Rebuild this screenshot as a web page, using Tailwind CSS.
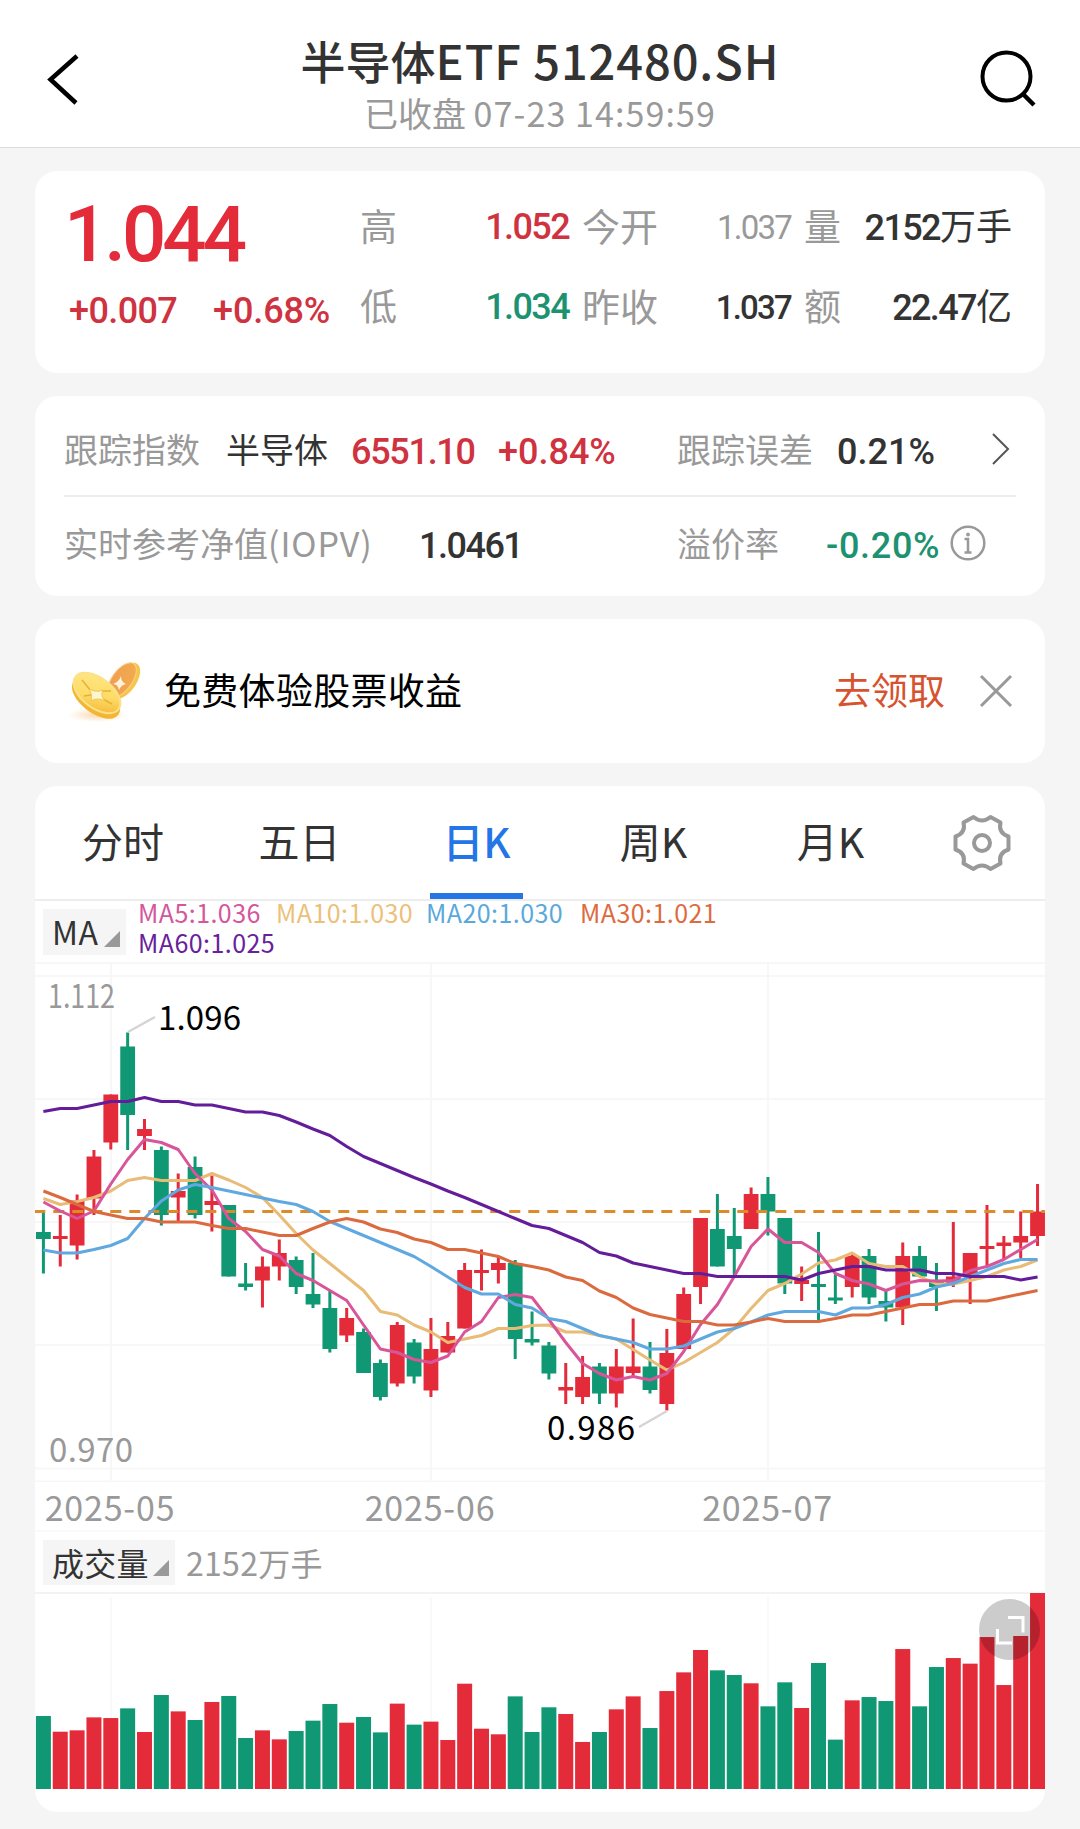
<!DOCTYPE html>
<html lang="zh-CN">

<head>
    <meta charset="UTF-8">
    <meta name="viewport" content="width=device-width, initial-scale=1.0">
    <title>半导体ETF 512480.SH</title>
    <script src="https://cdn.jsdelivr.net/npm/@tailwindcss/browser@4"></script>
</head>

<body class="bg-[#f5f5f5] text-[#333] font-['Noto_Sans_CJK_SC',sans-serif] w-[1080px] h-[1829px] overflow-hidden leading-none whitespace-nowrap">
    <!-- Header -->
    <header class="flex h-[148px] bg-white border-b border-[#dcdcdc]">
        <div class="w-[200px] pt-[54px] pl-[46px]">
            <svg class="w-[34px] h-[52px]" viewBox="0 0 34 52" fill="none" stroke="#000" stroke-width="4.5">
                <path d="M31 2 L4.500 25.500 L30 49" />
            </svg>
        </div>
        <div class="flex-1 flex flex-col items-center">
            <h1 class="mt-[34px] h-[52px] leading-[52px] text-[45px] font-medium">半导体<span class="text-[47px] tracking-[0.9px]">ETF 512480.SH</span></h1>
            <p class="mt-[6px] h-[42px] leading-[42px] text-[34px] text-[#999]">已收盘 <span class="tracking-[1.1px]">07-23 14:59:59</span></p>
        </div>
        <div class="w-[200px] pt-[50px] pl-[100px]">
            <svg class="w-[56px] h-[58px]" viewBox="0 0 56 58" fill="none" stroke="#000" stroke-width="4">
                <circle cx="26.500" cy="26.500" r="24" />
                <path d="M42 43 L54 55" stroke-width="4.500" />
            </svg>
        </div>
    </header>

    <main class="px-[35px] pt-[23px]">
        <!-- Quote -->
        <section class="flex h-[202px] bg-white rounded-[22px] pl-[34px] pr-[32px]">
            <div class="w-[291px] text-[#e32b3a] font-['Roboto']">
                <div class="mt-[26px] -ml-[5px] h-[76px] leading-[76px] text-[78px] font-medium tracking-[-4px]">1.044</div>
                <div class="flex mt-[18px] text-[36px] leading-[40px] font-medium text-[#cf3340] tracking-[-0.6px]">
                    <span class="w-[144px]">+0.007</span><span class="tracking-[-0.1px]">+0.68%</span>
                </div>
            </div>
            <div class="grid flex-1 grid-cols-[209px_13px_209px_13px_208px] auto-rows-[80px] items-center mt-[16px] h-[160px] text-[36px]">
                <div class="flex justify-between items-center"><span class="-mt-[4px] text-[37px] text-[#999]">高</span><span class="font-['Roboto'] font-medium text-[#cf3340] tracking-[-1.6px]">1.052</span></div>
                <i></i>
                <div class="flex justify-between items-center"><span class="-mt-[4px] text-[38px] text-[#999]">今开</span><span class="font-['Roboto'] text-[33px] text-[#999] tracking-[-1.8px]">1.037</span></div>
                <i></i>
                <div class="flex justify-between items-center"><span class="-mt-[4px] text-[37px] text-[#999]">量</span><span class="-mt-[3px]"><span class="font-['Roboto'] font-medium tracking-[-1.6px]">2152</span>万手</span></div>

                <div class="flex justify-between items-center"><span class="-mt-[4px] text-[37px] text-[#999]">低</span><span class="font-['Roboto'] font-medium text-[#1d9270] tracking-[-1.6px]">1.034</span></div>
                <i></i>
                <div class="flex justify-between items-center"><span class="-mt-[4px] text-[38px] text-[#999]">昨收</span><span class="font-['Roboto'] font-medium text-[33px] tracking-[-1.8px]">1.037</span></div>
                <i></i>
                <div class="flex justify-between items-center"><span class="-mt-[4px] text-[37px] text-[#999]">额</span><span class="-mt-[3px]"><span class="font-['Roboto'] font-medium tracking-[-1.6px]">22.47</span>亿</span></div>
            </div>
        </section>

        <!-- Tracked index -->
        <section class="mt-[23px] h-[200px] bg-white rounded-[22px] px-[29px] text-[34px]">
            <div class="flex items-center h-[101px] pt-[6px] border-b-2 border-[#eee]">
                <span class="w-[162px] text-[#999]">跟踪指数</span>
                <span class="w-[125px]">半导体</span>
                <span class="w-[147px] font-['Roboto'] font-medium text-[36px] pt-[6px] text-[#cf3340] tracking-[-1.3px]">6551.10</span>
                <span class="w-[179px] font-['Roboto'] font-medium text-[36px] pt-[6px] text-[#cf3340]">+0.84%</span>
                <span class="w-[160px] text-[#999]">跟踪误差</span>
                <span class="w-[154px] font-['Roboto'] font-medium text-[36px] pt-[6px]">0.21%</span>
                <svg class="w-[20px] h-[34px]" viewBox="0 0 20 34" fill="none" stroke="#555" stroke-width="2"><path d="M2 2 L17 17 L2 32" /></svg>
            </div>
            <div class="flex items-center h-[94px] -mt-[1px]">
                <span class="w-[355px] text-[#999]">实时参考净值<span class="tracking-[0.9px]">(IOPV)</span></span>
                <span class="w-[258px] font-['Roboto'] font-medium text-[36px] pt-[5px] tracking-[-1.5px]">1.0461</span>
                <span class="w-[149px] text-[#999]">溢价率</span>
                <span class="w-[124px] font-['Roboto'] font-medium text-[36px] pt-[5px] text-[#1d9270] tracking-[0.7px]">-0.20%</span>
                <svg class="w-[36px] h-[36px] shrink-0" viewBox="0 0 36 36" fill="none" stroke="#999" stroke-width="2.500">
                    <circle cx="18" cy="18" r="16.300" />
                    <path d="M14.500 14 H18 V27 M14.500 27.500 H21.500" /><circle cx="18" cy="9.500" r="1.500" fill="#999" stroke-width="1" />
                </svg>
            </div>
        </section>

        <!-- Promo -->
        <section class="flex items-center mt-[23px] h-[144px] bg-white rounded-[22px] pl-[28px] pr-[32px] text-[37px]">
            <svg class="w-[86px] h-[70px] mr-[15px]" viewBox="0 0 86 70">
                <defs>
                    <linearGradient id="gold" x1="0" y1="0" x2="1" y2="1"><stop offset="0" stop-color="#ffe98c" /><stop offset=".55" stop-color="#fddc66" /><stop offset="1" stop-color="#f2ae2c" /></linearGradient>
                    <linearGradient id="copper" x1="0" y1="0" x2="1" y2="1"><stop offset="0" stop-color="#ee9a55" /><stop offset="1" stop-color="#f3ae4b" /></linearGradient>
                    <radialGradient id="glow"><stop offset="0" stop-color="#fbd9b0" /><stop offset="1" stop-color="#fbd9b0" stop-opacity="0" /></radialGradient>
                </defs>
                <ellipse cx="34" cy="59" rx="29" ry="7" fill="url(#glow)" />
                <ellipse cx="62" cy="25" rx="21" ry="11" fill="#f8c54c" transform="rotate(-54 62 25)" />
                <ellipse cx="59" cy="24" rx="20" ry="10" fill="url(#copper)" stroke="#fbd08a" transform="rotate(-54 59 24)" />
                <path d="M58 20 Q58 26 63 28 Q58 29 56 34 Q55 28 50 28 Q56 26 58 20Z" fill="#fff3dd" />
                <ellipse cx="33" cy="42" rx="28" ry="15" fill="#f3b633" transform="rotate(37 33 42)" />
                <ellipse cx="34" cy="37" rx="27" ry="15" fill="url(#gold)" stroke="#fbe18a" stroke-width="2" transform="rotate(37 34 37)" />
                <path d="M19 24 L28 35 M48 35 L38 35 M38 42 L49 48 M21 40 L28 39" fill="none" stroke="#e5b13a" stroke-width="1.500" />
                <path d="M26 33 Q34 37 40 34 Q37 40 42 45 Q34 41 28 45 Q30 38 26 33Z" fill="#fff5cf" stroke="#f1c552" />
            </svg>
            <span class="flex-1 -mt-[4px] text-black tracking-[0.3px]">免费体验股票收益</span>
            <span class="-mt-[4px] text-[#d6532f]">去领取</span>
            <svg class="w-[34px] h-[34px] ml-[34px]" viewBox="0 0 34 34" fill="none" stroke="#999" stroke-width="3"><path d="M2 2 L32 32 M32 2 L2 32" /></svg>
        </section>

        <!-- Chart -->
        <section class="relative mt-[23px] h-[1026px] bg-white rounded-[22px] overflow-hidden">
            <nav class="flex h-[115px] text-[41px] border-b-2 border-[#ededed]">
                <div class="w-[176px] flex justify-center items-center pb-[4px]">分时</div>
                <div class="w-[177px] flex justify-center items-center pb-[4px]">五日</div>
                <div class="w-[177px] flex flex-col items-center text-[#2475e6]">
                    <div class="h-[108px] flex items-center pt-[1px] font-medium">日K</div>
                    <div class="w-[93px] h-[6px] bg-[#2475e6]"></div>
                </div>
                <div class="w-[177px] flex justify-center items-center pb-[4px]">周K</div>
                <div class="w-[177px] flex justify-center items-center pb-[4px]">月K</div>
                <div class="flex-1 flex justify-center items-center pr-[1px]">
                    <svg class="w-[60px] h-[60px]" viewBox="0 0 60 60" fill="none" stroke="#999" stroke-width="4" stroke-linejoin="round">
                        <path d="M21.500 4 Q30 11 38.500 4 L48.500 9.500 Q46 20 56.500 23.500 V36.500 Q46 40 48.500 50.500 L38.500 56 Q30 49 21.500 56 L11.500 50.500 Q14 40 3.500 36.500 V23.500 Q14 20 11.500 9.500 Z" />
                        <circle cx="30" cy="30" r="8" />
                    </svg>
                </div>
            </nav>

            <div class="flex h-[61px] pl-[8px]">
                <div class="flex w-[83px] h-[46px] mt-[8px] bg-[#f5f5f5] pl-[9px] text-[32px] leading-[45px] tracking-[0.5px]">MA<svg class="w-[16px] h-[16px] shrink-0 ml-[6px] mt-[22px]" viewBox="0 0 16 16"><path d="M16 0 V16 H0Z" fill="#999" /></svg></div>
                <div class="ml-[12px] text-[25px] leading-[30px] -mt-[4px] tracking-[0.45px]">
                    <div class="flex">
                        <span class="w-[138px] text-[#d4579c]">MA5:1.036</span>
                        <span class="w-[150px] text-[#ecc07a]">MA10:1.030</span>
                        <span class="w-[154px] text-[#5aa8dc]">MA20:1.030</span>
                        <span class="text-[#dd6b40]">MA30:1.021</span>
                    </div>
                    <div class="text-[#67219b]">MA60:1.025</div>
                </div>
            </div>

            <svg id="kline" class="block w-[1010px] h-[520px]" viewBox="35 962 1010 520" fill="none">
                <g stroke="#f7f7f7" stroke-width="2">
                    <path d="M35 963H1045M35 976H1045M35 1099H1045M35 1222H1045M35 1345H1045M35 1468.500H1045M35 1481.500H1045" />
                    <path d="M111 963V1482M431 963V1482M768 963V1482" />
                </g>
                <g id="candles"></g>
                <path d="M34.300 1211.500H1045" stroke="#dc8b2c" stroke-width="3.200" stroke-dasharray="11 8" />
                <g id="averages" stroke-width="3" stroke-linejoin="round"></g>
                <path d="M128 1032L155 1017M667 1411L639 1427" stroke="#d5d5d5" stroke-width="2.500" />
                <g font-size="33">
                    <text x="48" y="1008" fill="#999" textLength="67" lengthAdjust="spacingAndGlyphs">1.112</text>
                    <text x="49" y="1462" fill="#999" textLength="84">0.970</text>
                    <text x="158" y="1030" fill="#000" textLength="83">1.096</text>
                    <text x="547" y="1440" fill="#000" textLength="88">0.986</text>
                </g>
            </svg>

            <div class="h-[50px] border-b-2 border-[#fafafa] grid grid-cols-[150px_490px_185px] leading-[50px] text-[34px] text-[#999] tracking-[0.8px]">
                <span class="text-center">2025-05</span>
                <span class="text-center">2025-06</span>
                <span class="text-center">2025-07</span>
            </div>

            <div class="flex h-[62px] pl-[8px] border-b-2 border-[#f3f3f3] text-[32px] leading-[44px]">
                <div class="flex w-[132px] h-[45px] mt-[8px] bg-[#f5f5f5] pl-[9px] tracking-[0.3px]">成交量<svg class="w-[16px] h-[16px] ml-[4px] mt-[20px]" viewBox="0 0 16 16"><path d="M16 0 V16 H0Z" fill="#999" /></svg></div>
                <span class="mt-[8px] ml-[11px] text-[#999] tracking-[0.3px]">2152万手</span>
            </div>

            <svg id="volume" class="block w-[1010px] h-[197px] -mt-[2px]" viewBox="35 1592 1010 197">
                <path d="M111 1597V1789M431 1597V1789M768 1597V1789" stroke="#f9f9f9" stroke-width="2" />
            </svg>

            <button class="absolute right-[5px] bottom-[152px] w-[61px] h-[61px] rounded-full bg-black/20 flex justify-center items-center">
                <svg class="w-[30px] h-[30px]" viewBox="0 0 30 30" fill="none" stroke="#fff" stroke-width="3"><path d="M13 2.500H28V17.500M2.500 14V28H17" /></svg>
            </button>
        </section>
    </main>

    <script>
        const SVG = 'http://www.w3.org/2000/svg';
        const RED = '#e32b3a', GREEN = '#0f9873';
        const x = i => 43.4 + i * 16.85;

        // [up, high, bodyTop, bodyBottom, low, volume]
        const days = [
            [0, 1212.5, 1232, 1239, 1273.5, 75.4], [1, 1215, 1236, 1239, 1266.5, 59.2], [1, 1194.5, 1200.5, 1245.5, 1259.5, 60.6],
            [1, 1150, 1156.5, 1198.5, 1215, 74], [1, 1094.5, 1094.5, 1142.5, 1149.5, 73.3], [0, 1032.5, 1046.5, 1115, 1150, 83.3],
            [1, 1119, 1129, 1136, 1150, 58.9], [0, 1146.5, 1150, 1215, 1225.5, 97.1], [1, 1173.5, 1191, 1197.5, 1221.5, 80.2],
            [0, 1156.5, 1167, 1215, 1218.5, 71.3], [1, 1175.5, 1201, 1205, 1231.5, 89.9], [0, 1205, 1205, 1276.5, 1276.5, 96.1],
            [0, 1263, 1283.5, 1287, 1290.5, 52.7], [1, 1256.5, 1266.5, 1280.5, 1307.5, 60.6], [1, 1239.5, 1253, 1266.5, 1280.5, 51.3],
            [0, 1256.5, 1260, 1287, 1294, 59.9], [0, 1253, 1294, 1304.5, 1308, 70.6], [0, 1290.5, 1308, 1349, 1352.5, 87.8],
            [1, 1308, 1318, 1335.5, 1342, 68.5], [0, 1328.5, 1332, 1373, 1373, 74.4], [0, 1359.5, 1363, 1397, 1400.5, 58.5],
            [1, 1322, 1325, 1383.5, 1386.5, 88.2], [0, 1339, 1342.5, 1376.5, 1383.5, 66.5], [1, 1318, 1349, 1390.5, 1397, 69.6],
            [1, 1322, 1336, 1352.5, 1352.5, 50.6], [1, 1263, 1270, 1328.5, 1328.5, 108.8], [1, 1249.5, 1270, 1273, 1290.5, 62.3],
            [1, 1256.5, 1263, 1270, 1283.5, 56.5], [0, 1260, 1263, 1339, 1359, 95.7], [0, 1311.5, 1339, 1342.5, 1345.5, 58.9],
            [0, 1342, 1345.5, 1373.5, 1379.5, 84.4], [1, 1363, 1387, 1390.5, 1404, 77.5], [1, 1356, 1377, 1397, 1404, 48.6],
            [0, 1363, 1366.5, 1393.5, 1404, 58.9], [1, 1349, 1366.5, 1393.5, 1407.5, 82.3], [1, 1318.5, 1366.5, 1373, 1377, 95.7],
            [0, 1342, 1366.5, 1390, 1393.5, 63], [1, 1329, 1353, 1404, 1410.5, 101.2], [1, 1287.5, 1294, 1349, 1349, 120.5],
            [1, 1218, 1218, 1287, 1304, 143.6], [0, 1194, 1229, 1266.5, 1266.5, 122.6], [0, 1208, 1236, 1249, 1276.5, 117.8],
            [1, 1187.5, 1194, 1229, 1229, 109.2], [0, 1177, 1194, 1211.5, 1235.5, 85.4], [0, 1218, 1218, 1283.5, 1294, 110.2],
            [1, 1266.5, 1280, 1284, 1301, 83.7], [0, 1232, 1284, 1287, 1321, 130.2], [0, 1273, 1297.5, 1300.5, 1304, 51],
            [1, 1253, 1256, 1287, 1297.5, 91.6], [0, 1249, 1256, 1297.5, 1304, 95], [0, 1290.5, 1301, 1307.5, 1321.5, 90.9],
            [1, 1242.5, 1256, 1307.5, 1325, 144.6], [0, 1246, 1256, 1276.5, 1276.5, 85.4], [0, 1263, 1280, 1287, 1311, 126],
            [1, 1222, 1276.5, 1283.5, 1287, 135.3], [1, 1253, 1253, 1276.5, 1304, 129.5], [1, 1205, 1246, 1249, 1266.5, 157],
            [1, 1236, 1242.5, 1246, 1260, 107.4], [1, 1211.5, 1236, 1242.5, 1258, 158.1], [1, 1184, 1211.5, 1236, 1246, 202.5]
        ];

        const averages = {
            '#e8bb76': [1198.5, 1204.5, 1201.5, 1197.5, 1191, 1180.5, 1177.5, 1180.5, 1180.5, 1180.5, 1173.5, 1180, 1187.5, 1197.5, 1215, 1233.5, 1250, 1263.5, 1277, 1290.5, 1311.5, 1315, 1325, 1332, 1342.5, 1339, 1335.5, 1328.5, 1328.5, 1325.5, 1325, 1332, 1332, 1335.5, 1339, 1349.5, 1360, 1370, 1362.5, 1352.5, 1342.5, 1328.5, 1308.5, 1290.5, 1283.5, 1274, 1263, 1260, 1253, 1263.5, 1266.5, 1266.5, 1276.5, 1284, 1284, 1280.5, 1276.5, 1270, 1266.5, 1260],
            '#d8559a': [1202, 1211, 1218.5, 1211, 1184, 1159.5, 1139.5, 1142.5, 1149.5, 1173.5, 1190, 1218.5, 1231.5, 1249.5, 1256, 1273.5, 1280.5, 1290.5, 1300.5, 1325, 1349, 1352.5, 1359.5, 1362.5, 1356, 1332, 1321.5, 1297.5, 1294.5, 1297.5, 1319.5, 1342.5, 1363.5, 1373.5, 1380, 1376.5, 1380, 1373.5, 1351.5, 1324.5, 1304.5, 1276.5, 1246.5, 1229, 1242.5, 1242.5, 1252.5, 1273.5, 1280.5, 1284, 1290.5, 1284, 1280.5, 1281, 1280.5, 1270.5, 1266.5, 1259.5, 1249.5, 1239.5],
            '#5fa8e0': [1250, 1253, 1253, 1249.5, 1245.5, 1238.5, 1218.5, 1201, 1190, 1184.5, 1187.5, 1191, 1194.5, 1198, 1201.5, 1204.5, 1211.5, 1221.5, 1228.5, 1235.5, 1242.5, 1249.5, 1256.5, 1266.5, 1277, 1287.5, 1294, 1294, 1304.5, 1308, 1318.5, 1321.5, 1328.5, 1335.5, 1339, 1342.5, 1349, 1349, 1346, 1339, 1332, 1328.5, 1322, 1315, 1311.5, 1311.5, 1311.5, 1315, 1308, 1308, 1304.5, 1297.5, 1294, 1287, 1283.5, 1276.5, 1270, 1263.5, 1259.5, 1259.5],
            '#db6a3e': [1191, 1197.5, 1204.5, 1211.5, 1215, 1218.5, 1218.5, 1222, 1222, 1222, 1225.5, 1228.5, 1228.5, 1232, 1235.5, 1235.5, 1228.5, 1222, 1218.5, 1222, 1229, 1232.5, 1239, 1242.5, 1249.5, 1249.5, 1253, 1256.5, 1263.5, 1266.5, 1270, 1277, 1280.5, 1291, 1297.5, 1308, 1314.5, 1318, 1321.5, 1321.5, 1325, 1325, 1322, 1318.5, 1321.5, 1321.5, 1321.5, 1318.5, 1315, 1315, 1311.5, 1308, 1304.5, 1304.5, 1301, 1301, 1301, 1297.5, 1294, 1290.5],
            '#631d9a': [1111.5, 1108.5, 1108.5, 1105, 1101.5, 1101.5, 1097.5, 1101.5, 1101.5, 1105, 1105, 1108.5, 1112, 1112, 1115.5, 1122, 1129, 1135.5, 1146.5, 1156.5, 1163.5, 1170.5, 1177.5, 1184, 1191, 1197.5, 1204.5, 1211.5, 1218.5, 1225.5, 1228.5, 1235.5, 1242.5, 1252.5, 1256, 1263, 1266.5, 1270, 1273.5, 1273.5, 1276.5, 1276.5, 1276.5, 1276.5, 1276.5, 1280, 1273.5, 1270, 1266.5, 1266.5, 1270, 1270, 1270, 1273.5, 1273.5, 1276.5, 1276.5, 1276.5, 1280, 1277]
        };

        function add(parent, tag, attrs) {
            const el = document.createElementNS(SVG, tag);
            for (const key in attrs) el.setAttribute(key, attrs[key]);
            parent.appendChild(el);
        }

        const candles = document.getElementById('candles');
        const volume = document.getElementById('volume');
        const maxVolume = Math.max(...days.map(d => d[5]));
        days.forEach(([up, high, top, bottom, low, vol], i) => {
            const fill = up ? RED : GREEN;
            const height = vol / maxVolume * 196;
            add(candles, 'rect', { x: x(i) - 1.5, y: high, width: 3, height: low - high, fill });
            add(candles, 'rect', { x: x(i) - 7.4, y: top, width: 14.8, height: bottom - top, fill });
            add(volume, 'rect', { x: x(i) - 7.5, y: 1789 - height, width: 15, height, fill });
        });

        for (const color in averages) {
            const points = averages[color].map((y, i) => x(i) + ',' + y).join(' ');
            add(document.getElementById('averages'), 'polyline', { points, stroke: color });
        }
    </script>
</body>

</html>
